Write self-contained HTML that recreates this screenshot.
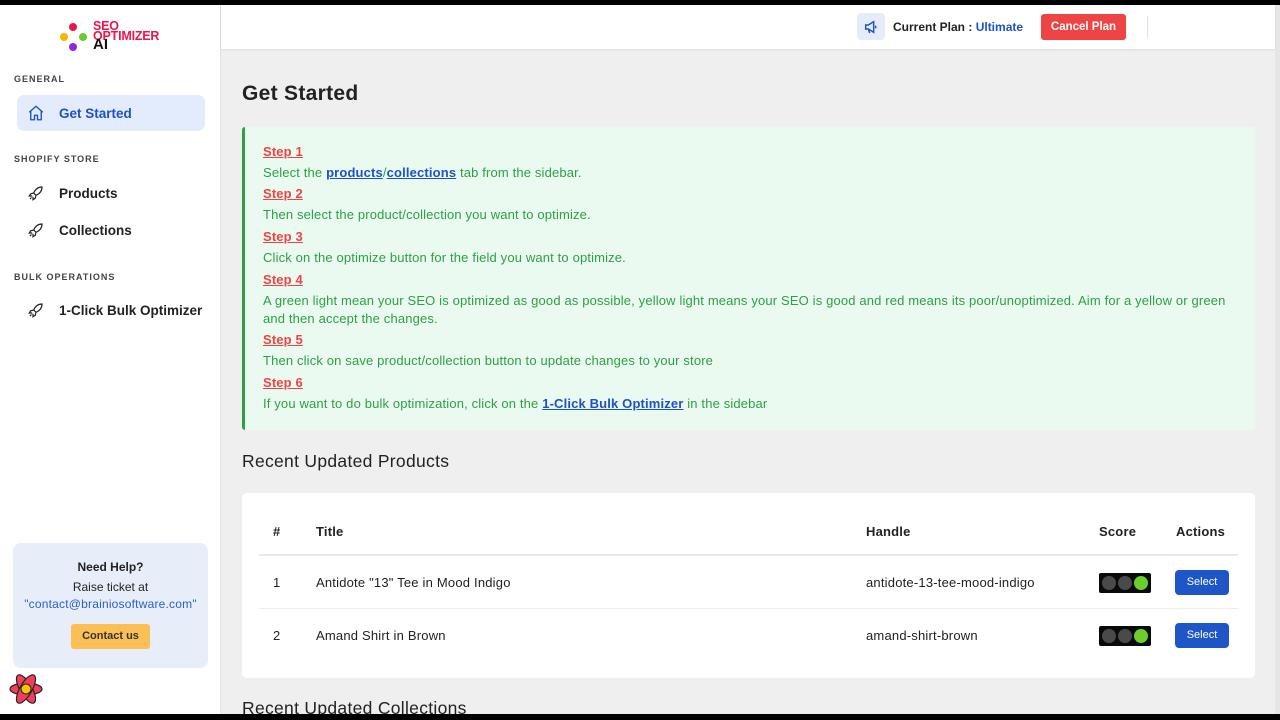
<!DOCTYPE html>
<html><head><meta charset="utf-8"><style>
*{box-sizing:border-box;margin:0;padding:0}
body{width:1280px;height:720px;overflow:hidden;font-family:"Liberation Sans",sans-serif;background:#efefef;position:relative;color:#222}
.abs{position:absolute}
.sb{left:0;top:5px;width:221px;height:709px;background:#fff;border-right:1px solid #e2e2e2}
.sec{font-size:9px;letter-spacing:1px;font-weight:bold;color:#444;left:14px}
.nav{left:17px;width:188px;height:36px;font-size:13.5px;font-weight:bold;color:#222;display:flex;align-items:center;padding-left:42px;border-radius:7px}
.nav svg{position:absolute;left:10px;top:9px}
.hd{left:221px;top:5px;width:1054px;height:44px;background:#fff;box-shadow:0 1px 2px rgba(0,0,0,.08)}
.box{left:242px;top:127px;width:1013px;height:303px;background:#eafaf0;border-left:3px solid #2ea043;border-radius:3px}
.l{position:absolute;left:18px;font-size:13px;color:#2ea043;white-space:nowrap;letter-spacing:.15px}
.st{color:#ef4444;font-weight:bold;text-decoration:underline}
.lk{color:#1e50c8;font-weight:bold;text-decoration:underline}
.card{left:242px;top:493px;width:1013px;height:185px;background:#fff;border-radius:5px}
.c{position:absolute;font-size:13px;color:#222;letter-spacing:.2px}
.th{font-weight:bold}
.tl{position:absolute;width:52px;height:20px;background:#0a0a0a;border-radius:2px}
.tl i{position:absolute;top:3px;width:14px;height:14px;border-radius:50%;background:#4a4a4a}
.btn{position:absolute;width:54px;height:25px;background:#1e56c8;color:#fff;font-size:11px;border-radius:4px;text-align:center;line-height:25px}
</style></head><body>
<div class="abs" style="left:0;top:0;width:1280px;height:5px;background:#000"></div>
<div class="abs" style="left:1275px;top:5px;width:5px;height:709px;background:#e6e6e6"></div>
<div class="abs sb"></div>
<div class="abs" style="left:69px;top:23px;width:8px;height:8px;border-radius:50%;background:#f0144a"></div>
<div class="abs" style="left:60px;top:33px;width:8px;height:8px;border-radius:50%;background:#f8b400"></div>
<div class="abs" style="left:79px;top:33px;width:8px;height:8px;border-radius:50%;background:#6cc832"></div>
<div class="abs" style="left:69px;top:43px;width:8px;height:8px;border-radius:50%;background:#8a2be2"></div>
<div class="abs" style="left:93px;top:21px;font-size:12.5px;line-height:10px;font-weight:bold;color:#f0144a;letter-spacing:-.2px">SEO<br>OPTIMIZER</div>
<div class="abs" style="left:93px;top:36px;font-size:15px;font-weight:900;color:#111">AI</div>
<div class="abs sec" style="top:74px">GENERAL</div>
<div class="abs nav" style="top:95px;background:#e3ecfc;color:#1e50c8"><svg width="18" height="18" viewBox="0 0 24 24" fill="none" stroke="#1e50c8" stroke-width="1.8"><path d="M3 11L12 3l9 8M5 9v12h5v-6h4v6h5V9"/></svg>Get Started</div>
<div class="abs sec" style="top:154px">SHOPIFY STORE</div>
<div class="abs nav" style="top:175px"><svg width="18" height="18" viewBox="0 0 24 24" fill="none" stroke="#222" stroke-width="1.6"><path d="M20 4c-5 0-9 3-11 8l3 3c5-2 8-6 8-11zM9 12l-4 1-2 3 4 0M12 15l-1 4-3 2 0-4M6 18l-2 2"/></svg>Products</div>
<div class="abs nav" style="top:212px"><svg width="18" height="18" viewBox="0 0 24 24" fill="none" stroke="#222" stroke-width="1.6"><path d="M20 4c-5 0-9 3-11 8l3 3c5-2 8-6 8-11zM9 12l-4 1-2 3 4 0M12 15l-1 4-3 2 0-4M6 18l-2 2"/></svg>Collections</div>
<div class="abs sec" style="top:272px">BULK OPERATIONS</div>
<div class="abs nav" style="top:292px"><svg width="18" height="18" viewBox="0 0 24 24" fill="none" stroke="#222" stroke-width="1.6"><path d="M20 4c-5 0-9 3-11 8l3 3c5-2 8-6 8-11zM9 12l-4 1-2 3 4 0M12 15l-1 4-3 2 0-4M6 18l-2 2"/></svg>1-Click Bulk Optimizer</div>
<div class="abs" style="left:13px;top:543px;width:195px;height:125px;background:#e8eef9;border-radius:8px;text-align:center">
<div style="margin-top:17px;font-size:12px;font-weight:bold">Need Help?</div>
<div style="margin-top:6px;font-size:12px">Raise ticket at</div>
<div style="margin-top:3px;font-size:12px;color:#2a5fd0;letter-spacing:.2px">"contact@brainiosoftware.com"</div>
<div style="margin:13px auto 0;width:79px;height:25px;background:#fbbf56;border-radius:3px;font-size:11px;line-height:25px;font-weight:bold;color:#333">Contact us</div>
</div>
<svg class="abs" style="left:8px;top:673px" width="36" height="32" viewBox="0 0 36 32"><g fill="#ef3f5a" stroke="#222" stroke-width="1.2"><ellipse cx="18" cy="16" rx="16" ry="6"/><ellipse cx="18" cy="16" rx="16" ry="6" transform="rotate(60 18 16)"/><ellipse cx="18" cy="16" rx="16" ry="6" transform="rotate(-60 18 16)"/></g><circle cx="18" cy="16" r="5" fill="#f8c400" stroke="#222"/></svg>
<div class="abs hd"></div>
<div class="abs" style="left:857px;top:13px;width:28px;height:27px;background:#e6ecf9;border-radius:4px"><svg style="margin:6px" width="16" height="16" viewBox="0 0 24 24" fill="none" stroke="#1e50c8" stroke-width="2.2"><path d="M4 9h4l8-5v16l-8-5H4zM8 15l2 6M19 10v4"/></svg></div>
<div class="abs" style="left:893px;top:20px;font-size:12px;font-weight:bold">Current Plan : <span style="color:#1e50c8">Ultimate</span></div>
<div class="abs" style="left:1041px;top:14px;width:85px;height:26px;background:#ef4444;border-radius:3px;color:#fff;font-size:11.5px;text-align:center;line-height:26px;font-weight:bold">Cancel Plan</div>
<div class="abs" style="left:1147px;top:16px;width:1px;height:22px;background:#e0e0e0"></div>
<div class="abs" style="left:242px;top:82px;font-size:21px;font-weight:bold;letter-spacing:.3px">Get Started</div>
<div class="abs box">
<div class="l st" style="top:17px">Step 1</div>
<div class="l" style="top:38px">Select the <span class="lk">products</span>/<span class="lk">collections</span> tab from the sidebar.</div>
<div class="l st" style="top:59px">Step 2</div>
<div class="l" style="top:80px">Then select the product/collection you want to optimize.</div>
<div class="l st" style="top:102px">Step 3</div>
<div class="l" style="top:123px">Click on the optimize button for the field you want to optimize.</div>
<div class="l st" style="top:145px">Step 4</div>
<div class="l" style="top:166px">A green light mean your SEO is optimized as good as possible, yellow light means your SEO is good and red means its poor/unoptimized. Aim for a yellow or green</div>
<div class="l" style="top:184px">and then accept the changes.</div>
<div class="l st" style="top:205px">Step 5</div>
<div class="l" style="top:226px">Then click on save product/collection button to update changes to your store</div>
<div class="l st" style="top:248px">Step 6</div>
<div class="l" style="top:269px">If you want to do bulk optimization, click on the <span class="lk">1-Click Bulk Optimizer</span> in the sidebar</div>
</div>
<div class="abs" style="left:242px;top:451px;font-size:17.5px;letter-spacing:.3px">Recent Updated Products</div>
<div class="abs card">
<div class="c th" style="left:31px;top:31px">#</div>
<div class="c th" style="left:74px;top:31px">Title</div>
<div class="c th" style="left:624px;top:31px">Handle</div>
<div class="c th" style="left:857px;top:31px">Score</div>
<div class="c th" style="left:934px;top:31px">Actions</div>
<div class="abs" style="left:17px;top:61px;width:979px;height:2px;background:#e8e8ee"></div>
<div class="c" style="left:31px;top:82px">1</div>
<div class="c" style="left:74px;top:82px">Antidote "13" Tee in Mood Indigo</div>
<div class="c" style="left:624px;top:82px">antidote-13-tee-mood-indigo</div>
<div class="tl" style="left:857px;top:80px"><i style="left:3px"></i><i style="left:19px"></i><i style="left:35px;background:#6cce2a"></i></div>
<div class="btn" style="left:933px;top:77px">Select</div>
<div class="abs" style="left:17px;top:115px;width:979px;height:1px;background:#ececf2"></div>
<div class="c" style="left:31px;top:135px">2</div>
<div class="c" style="left:74px;top:135px">Amand Shirt in Brown</div>
<div class="c" style="left:624px;top:135px">amand-shirt-brown</div>
<div class="tl" style="left:857px;top:133px"><i style="left:3px"></i><i style="left:19px"></i><i style="left:35px;background:#6cce2a"></i></div>
<div class="btn" style="left:933px;top:130px">Select</div>
</div>
<div class="abs" style="left:242px;top:698px;font-size:17.5px;letter-spacing:.3px">Recent Updated Collections</div>
<div class="abs" style="left:0;top:714px;width:1280px;height:6px;background:#000"></div>
</body></html>
